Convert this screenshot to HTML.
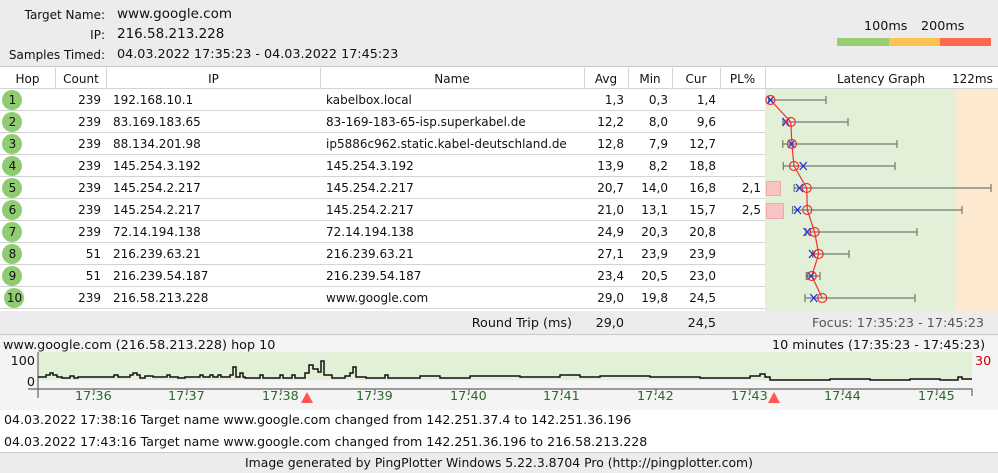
<!DOCTYPE html>
<html><head><meta charset="utf-8"><style>
*{margin:0;padding:0;box-sizing:border-box}
body{width:998px;height:473px;overflow:hidden;background:#ececec;font-family:"DejaVu Sans","Liberation Sans",sans-serif;font-size:12.75px;color:#111;position:relative}
.a{position:absolute;white-space:nowrap}
.r{text-align:right}
.c{text-align:center}
.t{font-size:12px}
</style></head><body>
<div class="a r t" style="left:0;width:105px;top:8px">Target Name:</div>
<div class="a" style="left:117px;top:6px;font-size:13.5px">www.google.com</div>
<div class="a r t" style="left:0;width:105px;top:28px">IP:</div>
<div class="a" style="left:117px;top:26px;font-size:13.5px">216.58.213.228</div>
<div class="a r t" style="left:0;width:105px;top:48px">Samples Timed:</div>
<div class="a" style="left:117px;top:47px">04.03.2022 17:35:23 - 04.03.2022 17:45:23</div>
<div class="a" style="left:864px;top:19px">100ms</div>
<div class="a" style="left:921px;top:19px">200ms</div>
<div class="a" style="left:837px;top:38px;width:52px;height:8px;background:#98ce72"></div>
<div class="a" style="left:889px;top:38px;width:51px;height:8px;background:#fec24f"></div>
<div class="a" style="left:940px;top:38px;width:51px;height:8px;background:#fe6750"></div>

<div class="a" style="left:0;top:66px;width:998px;height:245px;background:#fff;border-top:1px solid #c8c8c8"></div>
<svg class="a" style="left:0;top:0" width="998" height="473">
<rect x="765" y="89" width="190" height="222" fill="#e1f0d7"/>
<rect x="955" y="89" width="43" height="222" fill="#fde9cf"/>
<g stroke="#d4d4d4" stroke-width="1">
<line x1="0" y1="88.5" x2="998" y2="88.5"/>
<line x1="0" y1="110.5" x2="765" y2="110.5"/><line x1="0" y1="132.5" x2="765" y2="132.5"/>
<line x1="0" y1="154.5" x2="765" y2="154.5"/><line x1="0" y1="176.5" x2="765" y2="176.5"/>
<line x1="0" y1="198.5" x2="765" y2="198.5"/><line x1="0" y1="220.5" x2="765" y2="220.5"/>
<line x1="0" y1="242.5" x2="765" y2="242.5"/><line x1="0" y1="264.5" x2="765" y2="264.5"/>
<line x1="0" y1="286.5" x2="765" y2="286.5"/><line x1="0" y1="308.5" x2="765" y2="308.5"/>
<line x1="55.5" y1="68" x2="55.5" y2="88"/><line x1="106.5" y1="68" x2="106.5" y2="88"/>
<line x1="320.5" y1="68" x2="320.5" y2="88"/><line x1="584.5" y1="68" x2="584.5" y2="88"/>
<line x1="628.5" y1="68" x2="628.5" y2="88"/><line x1="672.5" y1="68" x2="672.5" y2="88"/>
<line x1="720.5" y1="68" x2="720.5" y2="88"/><line x1="765.5" y1="68" x2="765.5" y2="88"/>
</g>
<g fill="#90cc72">
<circle cx="12" cy="100" r="10"/><circle cx="12" cy="122" r="10"/><circle cx="12" cy="144" r="10"/>
<circle cx="12" cy="166" r="10"/><circle cx="12" cy="188" r="10"/><circle cx="12" cy="210" r="10"/>
<circle cx="12" cy="232" r="10"/><circle cx="12" cy="254" r="10"/><circle cx="12" cy="276" r="10"/>
<circle cx="14" cy="298" r="10"/>
</g>
<rect x="766.5" y="181.5" width="14" height="14" fill="#f9c3c3" stroke="#eaa" />
<rect x="766.5" y="203.5" width="17" height="15" fill="#f9c3c3" stroke="#eaa" />
<g stroke="#707a70" stroke-width="1.2" fill="none">
<path d="M768.6 100H826M768.6 96v8M826 96v8"/>
<path d="M783 122H848M783 118v8M848 118v8"/>
<path d="M782.8 144H897M782.8 140v8M897 140v8"/>
<path d="M783.3 166H895M783.3 162v8M895 162v8"/>
<path d="M794.2 188H991M794.2 184v8M991 184v8"/>
<path d="M792.5 210H962M792.5 206v8M962 206v8"/>
<path d="M806 232H917M806 228v8M917 228v8"/>
<path d="M812.7 254H849M812.7 250v8M849 250v8"/>
<path d="M806.3 276H820M806.3 272v8M820 272v8"/>
<path d="M805 298H915M805 294v8M915 294v8"/>
</g>
<polyline fill="none" stroke="#f03030" stroke-width="1.2" points="770.4,100 790.8,122 791.9,144 794,166 806.7,188 807.3,210 814.6,232 818.7,254 811.8,276 822.2,298"/>
<g stroke="#2030e0" stroke-width="1.3">
<path d="M767 96l7 8M774 96l-7 8"/><path d="M782.5 118l7 8M789.5 118l-7 8"/>
<path d="M788 140l7 8M795 140l-7 8"/><path d="M799.7 162l7 8M806.7 162l-7 8"/>
<path d="M796 184l7 8M803 184l-7 8"/><path d="M794 206l7 8M801 206l-7 8"/>
<path d="M803.5 228l7 8M810.5 228l-7 8"/><path d="M809 250l7 8M816 250l-7 8"/>
<path d="M807.5 272l7 8M814.5 272l-7 8"/><path d="M810.3 294l7 8M817.3 294l-7 8"/>
</g>
<g stroke="#f03030" stroke-width="1.2" fill="none">
<circle cx="770.4" cy="100" r="4.5"/><circle cx="790.8" cy="122" r="4.5"/><circle cx="791.9" cy="144" r="4.5"/>
<circle cx="794" cy="166" r="4.5"/><circle cx="806.7" cy="188" r="4.5"/><circle cx="807.3" cy="210" r="4.5"/>
<circle cx="814.6" cy="232" r="4.5"/><circle cx="818.7" cy="254" r="4.5"/><circle cx="811.8" cy="276" r="4.5"/>
<circle cx="822.2" cy="298" r="4.5"/>
</g>
<rect x="0" y="311" width="998" height="23" fill="#ececec"/>
<line x1="0" y1="334.5" x2="998" y2="334.5" stroke="#c8c8c8"/>
<rect x="0" y="335" width="998" height="75" fill="#f4f4f4"/>
<rect x="38" y="352" width="934" height="28" fill="#e1f0d7"/>
<g stroke="#666" stroke-width="1.2" fill="none">
<path d="M38 352V398M28 389H972V396"/>
<path d="M94 389v5M187 389v5M281 389v5M375 389v5M469 389v5M562 389v5M656 389v5M750 389v5M843 389v5M937 389v5"/>
</g>
<polyline fill="none" stroke="#111" stroke-width="1.5" points="38,377 46,377 46,375 50,375 50,373 53,373 53,375 57,375 57,377 62,377 62,378 70,378 70,376 74,376 74,378 78,378 78,377 114,377 114,375 118,375 118,377 130,377 130,375 133,375 133,373 137,373 137,375 140,375 140,378 145,378 145,376 153,376 153,377 167,377 167,375 170,375 170,377 178,377 178,378 185,378 185,377 200,377 200,375 203,375 203,377 210,377 210,375 213,375 213,377 218,377 218,375 221,375 221,377 230,377 230,375 233,375 233,367 236,367 236,377 240,377 240,373 243,373 243,377 245,377 245,378 260,378 260,375 263,375 263,378 280,378 280,375 283,375 283,378 292,378 292,375 295,375 295,378 305,378 305,373 309,373 309,365 313,365 313,369 318,369 318,372 321,372 321,361 324,361 324,375 332,375 332,378 345,378 345,376 350,376 350,373 353,373 353,367 356,367 356,377 366,377 366,378 385,378 385,375 388,375 388,378 420,378 420,376 440,376 440,378 470,378 470,376 520,376 520,377 560,377 560,375 580,375 580,377 600,377 600,376 650,376 650,377 700,377 700,378 750,378 750,376 760,376 760,374 765,374 765,377 770,377 770,380 830,380 830,379 870,379 870,380 910,380 910,379 940,379 940,380 958,380 958,377 962,377 962,379 972,379"/>
<polygon points="307,392 301,403 313,403" fill="#f55"/>
<polygon points="774,392 768,403 780,403" fill="#f55"/>
<rect x="0" y="410" width="998" height="42" fill="#fff"/>
<line x1="0" y1="452.5" x2="998" y2="452.5" stroke="#c8c8c8"/>
</svg>

<div class="t">
<div class="a c" style="left:0;width:55px;top:72px">Hop</div>
<div class="a c" style="left:55px;width:52px;top:72px">Count</div>
<div class="a c" style="left:107px;width:213px;top:72px">IP</div>
<div class="a c" style="left:320px;width:264px;top:72px">Name</div>
<div class="a c" style="left:584px;width:44px;top:72px">Avg</div>
<div class="a c" style="left:628px;width:44px;top:72px">Min</div>
<div class="a c" style="left:672px;width:48px;top:72px">Cur</div>
<div class="a c" style="left:720px;width:45px;top:72px">PL%</div>
<div class="a" style="left:837px;top:72px">Latency Graph</div>
<div class="a" style="left:952px;top:72px">122ms</div>
</div>

<div class="t" style="position:absolute;left:0;top:89px;width:765px">
<style>.row{height:22px;position:relative;line-height:22px}.row span{position:absolute;white-space:nowrap}</style>
<div class="row"><span style="left:0;width:25px;text-align:center">1</span><span style="left:55px;width:46px;text-align:right">239</span><span style="left:113px">192.168.10.1</span><span style="left:326px">kabelbox.local</span><span style="left:584px;width:40px;text-align:right">1,3</span><span style="left:628px;width:40px;text-align:right">0,3</span><span style="left:672px;width:44px;text-align:right">1,4</span></div>
<div class="row"><span style="left:0;width:25px;text-align:center">2</span><span style="left:55px;width:46px;text-align:right">239</span><span style="left:113px">83.169.183.65</span><span style="left:326px">83-169-183-65-isp.superkabel.de</span><span style="left:584px;width:40px;text-align:right">12,2</span><span style="left:628px;width:40px;text-align:right">8,0</span><span style="left:672px;width:44px;text-align:right">9,6</span></div>
<div class="row"><span style="left:0;width:25px;text-align:center">3</span><span style="left:55px;width:46px;text-align:right">239</span><span style="left:113px">88.134.201.98</span><span style="left:326px">ip5886c962.static.kabel-deutschland.de</span><span style="left:584px;width:40px;text-align:right">12,8</span><span style="left:628px;width:40px;text-align:right">7,9</span><span style="left:672px;width:44px;text-align:right">12,7</span></div>
<div class="row"><span style="left:0;width:25px;text-align:center">4</span><span style="left:55px;width:46px;text-align:right">239</span><span style="left:113px">145.254.3.192</span><span style="left:326px">145.254.3.192</span><span style="left:584px;width:40px;text-align:right">13,9</span><span style="left:628px;width:40px;text-align:right">8,2</span><span style="left:672px;width:44px;text-align:right">18,8</span></div>
<div class="row"><span style="left:0;width:25px;text-align:center">5</span><span style="left:55px;width:46px;text-align:right">239</span><span style="left:113px">145.254.2.217</span><span style="left:326px">145.254.2.217</span><span style="left:584px;width:40px;text-align:right">20,7</span><span style="left:628px;width:40px;text-align:right">14,0</span><span style="left:672px;width:44px;text-align:right">16,8</span><span style="left:720px;width:41px;text-align:right">2,1</span></div>
<div class="row"><span style="left:0;width:25px;text-align:center">6</span><span style="left:55px;width:46px;text-align:right">239</span><span style="left:113px">145.254.2.217</span><span style="left:326px">145.254.2.217</span><span style="left:584px;width:40px;text-align:right">21,0</span><span style="left:628px;width:40px;text-align:right">13,1</span><span style="left:672px;width:44px;text-align:right">15,7</span><span style="left:720px;width:41px;text-align:right">2,5</span></div>
<div class="row"><span style="left:0;width:25px;text-align:center">7</span><span style="left:55px;width:46px;text-align:right">239</span><span style="left:113px">72.14.194.138</span><span style="left:326px">72.14.194.138</span><span style="left:584px;width:40px;text-align:right">24,9</span><span style="left:628px;width:40px;text-align:right">20,3</span><span style="left:672px;width:44px;text-align:right">20,8</span></div>
<div class="row"><span style="left:0;width:25px;text-align:center">8</span><span style="left:55px;width:46px;text-align:right">51</span><span style="left:113px">216.239.63.21</span><span style="left:326px">216.239.63.21</span><span style="left:584px;width:40px;text-align:right">27,1</span><span style="left:628px;width:40px;text-align:right">23,9</span><span style="left:672px;width:44px;text-align:right">23,9</span></div>
<div class="row"><span style="left:0;width:25px;text-align:center">9</span><span style="left:55px;width:46px;text-align:right">51</span><span style="left:113px">216.239.54.187</span><span style="left:326px">216.239.54.187</span><span style="left:584px;width:40px;text-align:right">23,4</span><span style="left:628px;width:40px;text-align:right">20,5</span><span style="left:672px;width:44px;text-align:right">23,0</span></div>
<div class="row"><span style="left:2px;width:25px;text-align:center">10</span><span style="left:55px;width:46px;text-align:right">239</span><span style="left:113px">216.58.213.228</span><span style="left:326px">www.google.com</span><span style="left:584px;width:40px;text-align:right">29,0</span><span style="left:628px;width:40px;text-align:right">19,8</span><span style="left:672px;width:44px;text-align:right">24,5</span></div>
</div>

<div class="a r" style="left:400px;width:172px;top:316px">Round Trip (ms)</div>
<div class="a r" style="left:584px;width:40px;top:316px">29,0</div>
<div class="a r" style="left:672px;width:44px;top:316px">24,5</div>
<div class="a" style="left:812px;top:316px;color:#555">Focus: 17:35:23 - 17:45:23</div>

<div class="a" style="left:3px;top:338px">www.google.com (216.58.213.228) hop 10</div>
<div class="a" style="left:772px;top:338px">10 minutes (17:35:23 - 17:45:23)</div>
<div class="a r" style="left:0;width:35px;top:354px">100</div>
<div class="a r" style="left:0;width:35px;top:375px">0</div>
<div class="a" style="left:975px;top:354px;color:#c00">30</div>
<div style="color:#2a6a2a">
<div class="a" style="left:75px;top:389px">17:36</div>
<div class="a" style="left:168px;top:389px">17:37</div>
<div class="a" style="left:262px;top:389px">17:38</div>
<div class="a" style="left:356px;top:389px">17:39</div>
<div class="a" style="left:450px;top:389px">17:40</div>
<div class="a" style="left:543px;top:389px">17:41</div>
<div class="a" style="left:637px;top:389px">17:42</div>
<div class="a" style="left:731px;top:389px">17:43</div>
<div class="a" style="left:824px;top:389px">17:44</div>
<div class="a" style="left:918px;top:389px">17:45</div>
</div>

<div class="a" style="left:4px;top:412px;font-size:12.6px">04.03.2022 17:38:16 Target name www.google.com changed from 142.251.37.4 to 142.251.36.196</div>
<div class="a" style="left:4px;top:434px;font-size:12.6px">04.03.2022 17:43:16 Target name www.google.com changed from 142.251.36.196 to 216.58.213.228</div>
<div class="a" style="left:245px;top:455px;font-size:12.4px">Image generated by PingPlotter Windows 5.22.3.8704 Pro (http://pingplotter.com)</div>
</body></html>
